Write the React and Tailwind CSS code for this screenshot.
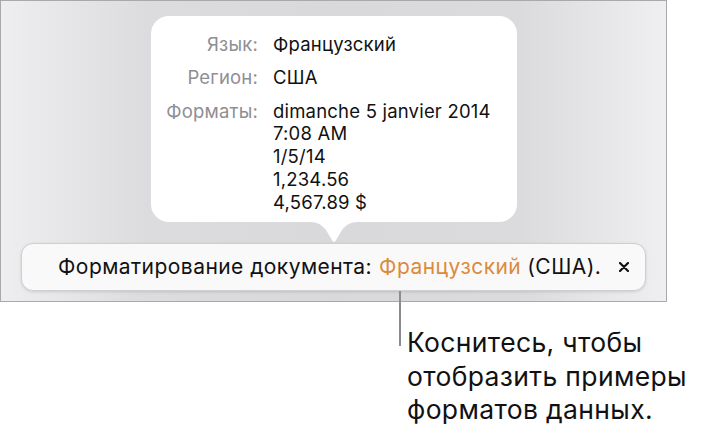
export default function App() {
  const font = { fontFamily: "Inter, 'Noto Sans', sans-serif" };
  return (
    <div className="w-[705px] h-[436px] bg-white" style={font}>
      <div className="w-[667px] h-[302px] border border-[#a9a9ac] bg-[linear-gradient(to_right,#eeeef1_0%,#dcdcdf_22%,#d9d9dc_50%,#dbdbde_78%,#efeff2_100%)] pt-[15px] flex flex-col">
        <div className="ml-[150px] w-[366px] h-[206px] bg-white rounded-[18px] pt-[17px] flex flex-col gap-[10.5px] text-[18.5px] tracking-[0.2px] leading-[22.75px] text-[#111113]">
          <div className="flex">
            <div className="w-[107px] text-right text-[#8e8e93]">Язык:</div>
            <div className="ml-[15px]">Французский</div>
          </div>
          <div className="flex">
            <div className="w-[107px] text-right text-[#8e8e93]">Регион:</div>
            <div className="ml-[15px]">США</div>
          </div>
          <div className="flex">
            <div className="w-[107px] text-right text-[#8e8e93]">Форматы:</div>
            <div className="ml-[15px] flex flex-col">
              <span>dimanche 5 janvier 2014</span>
              <span>7:08 AM</span>
              <span>1/5/14</span>
              <span>1,234.56</span>
              <span>4,567.89 $</span>
            </div>
          </div>
        </div>
        <svg className="ml-[309px] block" width="48" height="21" viewBox="0 0 48 21">
          <path d="M0 0 C8 0 12 3 16 8 L22.5 19 Q24 21 25.5 19 L32 8 C36 3 40 0 48 0 Z" fill="#ffffff" />
        </svg>
        <div className="ml-[20px] w-[625px] h-[48px] rounded-[12px] bg-[#f9f9f9] border border-[#cfcfd2] shadow-[0_1px_3px_rgba(0,0,0,0.12)] flex items-center pl-[36px] text-[21px] tracking-[0.45px] text-[#111113]">
          <span>Форматирование документа:</span>
          <span className="ml-[7px] text-[#dc8a3b]">Французский</span>
          <span className="ml-[6px]">(США).</span>
          <svg className="ml-[18px]" width="10" height="10" viewBox="0 0 10 10">
            <path d="M1 1 L9 9 M9 1 L1 9" stroke="#111113" strokeWidth="2.2" strokeLinecap="round" />
          </svg>
        </div>
      </div>
      <div className="relative pl-[407px] pt-[24px] text-[26.5px] tracking-[0.35px] leading-[33.5px] text-[#111113]">
        <div className="absolute left-[399px] top-[-11px] w-[2px] h-[55px] bg-[#8c8c8e]" />
        <div>Коснитесь, чтобы</div>
        <div>отобразить примеры</div>
        <div>форматов данных.</div>
      </div>
    </div>
  );
}
